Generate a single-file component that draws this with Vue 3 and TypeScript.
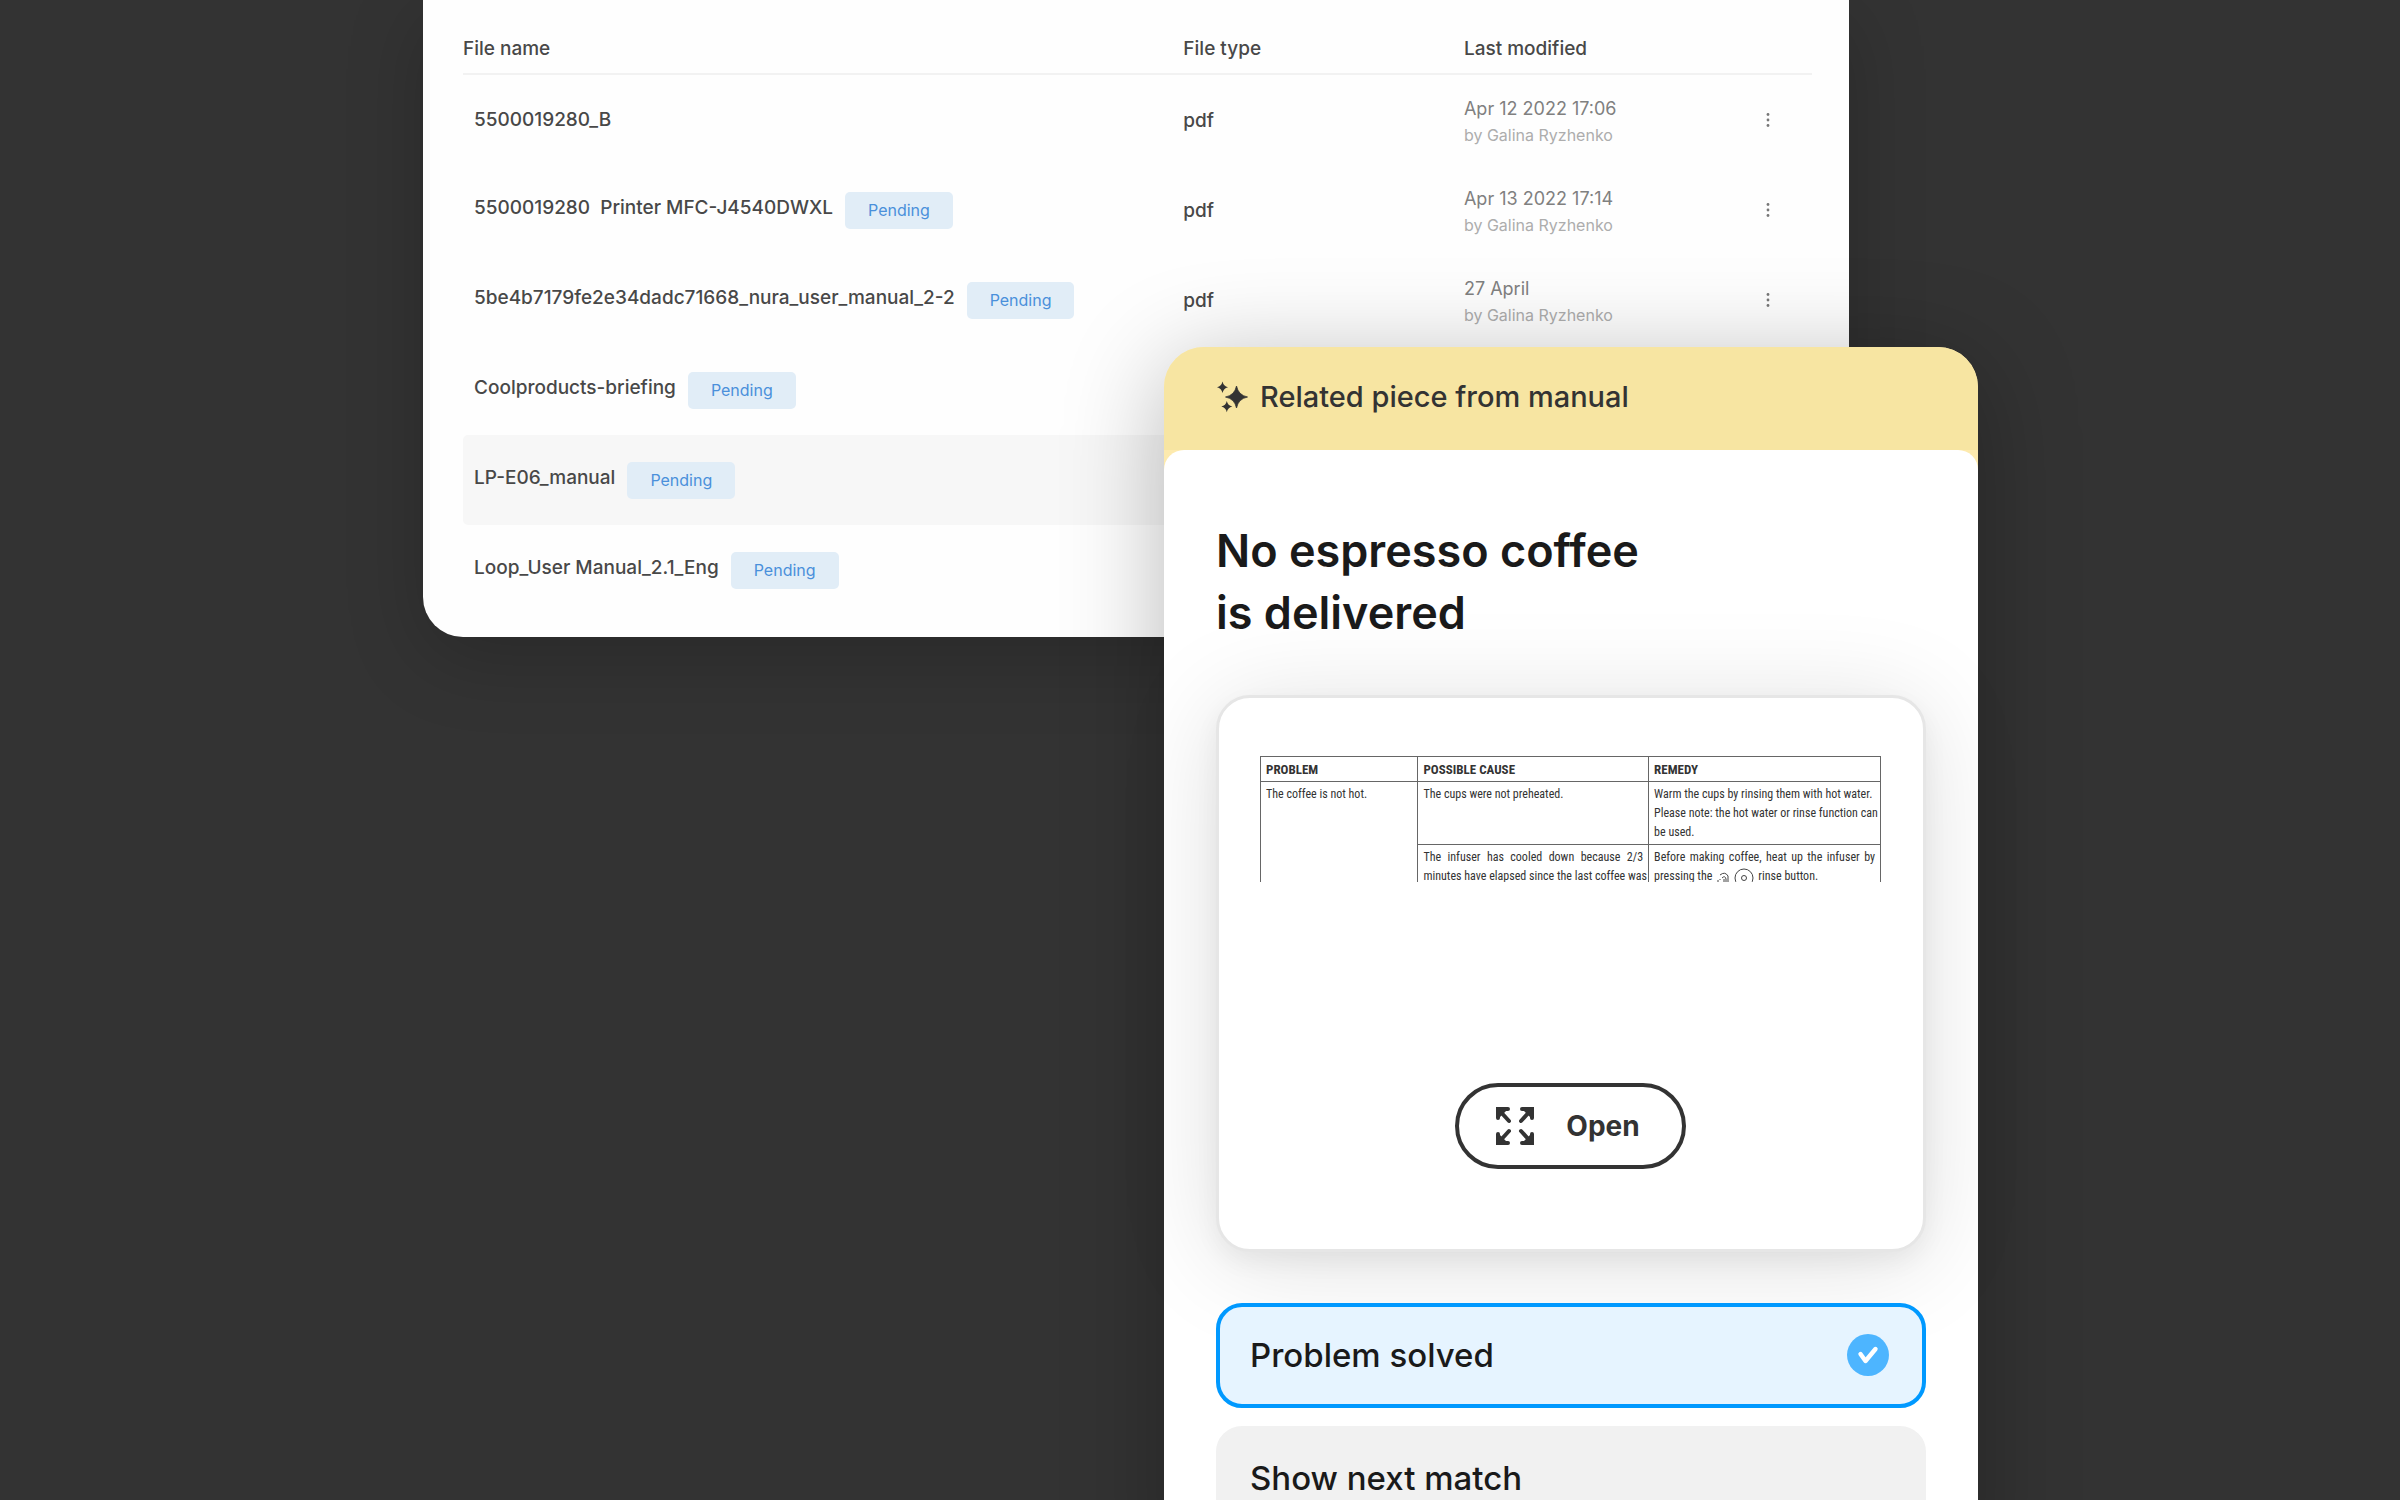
<script setup lang="ts">
import { ref } from 'vue'

interface FileRow {
  name: string
  type?: string
  modified?: string
  author?: string
  pending: boolean
  active?: boolean
}

const files: FileRow[] = [
  { name: '5500019280_B', type: 'pdf', modified: 'Apr 12 2022 17:06', author: 'by Galina Ryzhenko', pending: false },
  { name: '5500019280\u00a0 Printer MFC-J4540DWXL', type: 'pdf', modified: 'Apr 13 2022 17:14', author: 'by Galina Ryzhenko', pending: true },
  { name: '5be4b7179fe2e34dadc71668_nura_user_manual_2-2', type: 'pdf', modified: '27 April', author: 'by Galina Ryzhenko', pending: true },
  { name: 'Coolproducts-briefing', pending: true },
  { name: 'LP-E06_manual', pending: true, active: true },
  { name: 'Loop_User Manual_2.1_Eng', pending: true },
]

const answers = ['Problem solved', 'Show next match']
const selected = ref(answers[0])
</script>

<template>
  <main class="stage">
    <section class="files">
      <table class="file-table">
        <colgroup>
          <col class="col-name" />
          <col class="col-type" />
          <col class="col-modified" />
          <col class="col-menu" />
        </colgroup>
        <thead>
          <tr>
            <th scope="col">File name</th>
            <th scope="col">File type</th>
            <th scope="col">Last modified</th>
            <th></th>
          </tr>
        </thead>
        <tbody>
          <tr v-for="file in files" :key="file.name" :class="{ active: file.active }">
            <td>
              <div class="file">
                <span class="file-name">{{ file.name }}</span>
                <span v-if="file.pending" class="badge">Pending</span>
              </div>
            </td>
            <td>{{ file.type }}</td>
            <td>
              <div v-if="file.modified" class="modified">
                <span class="date">{{ file.modified }}</span>
                <span class="author">{{ file.author }}</span>
              </div>
            </td>
            <td>
              <button v-if="file.modified" class="menu" type="button" aria-label="More actions">
                <svg width="4" height="16" viewBox="0 0 4 16" fill="#777">
                  <circle cx="2" cy="2.5" r="1.4" />
                  <circle cx="2" cy="8" r="1.4" />
                  <circle cx="2" cy="13.5" r="1.4" />
                </svg>
              </button>
            </td>
          </tr>
        </tbody>
      </table>
    </section>

    <section class="phone">
      <header class="phone-head">
        <svg width="32" height="32" viewBox="0 0 32 32" fill="#333">
          <path d="M20.5 5Q22.3 14.2 31.5 16Q22.3 17.8 20.5 27Q18.7 17.8 9.5 16Q18.7 14.2 20.5 5Z" stroke="#333" stroke-width="0.8" stroke-linejoin="round" />
          <path d="M6.5 0.5Q7.5 5.2 12 6.2Q7.5 7.2 6.5 12Q5.5 7.2 1 6.2Q5.5 5.2 6.5 0.5Z" />
          <path d="M10.8 20Q11.8 24.6 16.3 25.6Q11.8 26.6 10.8 31.2Q9.8 26.6 5.3 25.6Q9.8 24.6 10.8 20Z" />
        </svg>
        <span>Related piece from manual</span>
      </header>

      <div class="phone-body">
        <h1>No espresso coffee<br />is delivered</h1>

        <article class="preview">
          <div class="excerpt">
            <table class="manual">
              <colgroup>
                <col class="col-problem" />
                <col class="col-cause" />
                <col class="col-remedy" />
              </colgroup>
              <thead>
                <tr>
                  <th scope="col">PROBLEM</th>
                  <th scope="col">POSSIBLE CAUSE</th>
                  <th scope="col">REMEDY</th>
                </tr>
              </thead>
              <tbody>
                <tr>
                  <td rowspan="2">The coffee is not hot.</td>
                  <td>The cups were not preheated.</td>
                  <td>
                    <span class="line">Warm the cups by rinsing them with hot water.</span>
                    <span class="line">Please note: the hot water or rinse function can</span>
                    <span class="line">be used.</span>
                  </td>
                </tr>
                <tr>
                  <td>
                    <span class="line full">The infuser has cooled down because 2/3</span>
                    <span class="line">minutes have elapsed since the last coffee was</span>
                  </td>
                  <td>
                    <span class="line full">Before making coffee, heat up the infuser by</span>
                    <span class="line keys">
                      pressing the
                      <svg width="14" height="19" viewBox="0 0 14 19" fill="none" stroke="#444" stroke-width="1">
                        <path d="M4 8Q9 4 12 9V17M6 11Q9 8 10 12V17M8 12V17M1 14H3M4 12V13M1 17H3M5 15V17" />
                      </svg>
                      <svg width="20" height="19" viewBox="0 0 20 19" fill="none" stroke="#444" stroke-width="1">
                        <circle cx="10" cy="11" r="9" />
                        <circle cx="10" cy="11" r="2.5" />
                      </svg>
                      rinse button.
                    </span>
                  </td>
                </tr>
              </tbody>
            </table>
          </div>

          <button class="open" type="button">
            <svg width="40" height="40" viewBox="0 0 40 40" fill="none" stroke="#333" stroke-width="4" stroke-linecap="round" stroke-linejoin="miter">
              <path d="M3 12V3H13M4 4L14 15M27 3H37V12M36 4L26 15M3 28V37H13M4 36L14 25M27 37H37V28M36 36L26 25" />
              <path d="M3 3H13L3 13ZM37 3H27L37 13ZM3 37H13L3 27ZM37 37H27L37 27Z" stroke="none" fill="#333" />
            </svg>
            <span>Open</span>
          </button>
        </article>

        <div class="answers">
          <button
            v-for="answer in answers"
            :key="answer"
            type="button"
            class="answer"
            :class="{ selected: answer === selected }"
            :aria-pressed="answer === selected"
            @click="selected = answer"
          >
            <span>{{ answer }}</span>
            <svg v-if="answer === selected" width="42" height="42" viewBox="0 0 42 42">
              <circle cx="21" cy="21" r="21" fill="#4db5ff" />
              <path d="M13.5 20L18.5 27L28.5 15" fill="none" stroke="#fff" stroke-width="4.4" stroke-linecap="round" stroke-linejoin="round" />
            </svg>
          </button>
        </div>
      </div>
    </section>
  </main>
</template>

<style>
body {
  background: #333;
}
</style>

<style scoped>
* {
  box-sizing: border-box;
}

.stage {
  display: grid;
  grid-template-columns: 423fr 741fr 685fr 129fr 422fr;
  align-items: start;
  height: 100vh;
  overflow: hidden;
  background: #333;
  font-family: Inter, "Liberation Sans", sans-serif;
}

button {
  font-family: inherit;
  cursor: pointer;
}

.files {
  grid-column: 2 / 4;
  grid-row: 1;
  padding: 0 37px 22px 40px;
  border-radius: 0 0 40px 40px;
  background: #fefefe;
  box-shadow: 0 20px 80px rgba(0, 0, 0, 0.2);
}

.file-table {
  width: 100%;
  table-layout: fixed;
  border-collapse: separate;
  border-spacing: 0;
  color: #484848;
  font-size: 19px;
  font-weight: 500;
  line-height: 27px;
}

.col-name {
  width: 53.4%;
}

.col-type {
  width: 20.8%;
}

.col-menu {
  width: 88px;
}

.file-table th {
  padding: 35px 0 11px;
  border-bottom: 2px solid #f2f2f2;
  font-weight: 500;
  text-align: left;
}

.file-table td {
  height: 90px;
  padding: 0;
  vertical-align: middle;
}

.file-table td:first-child {
  padding-left: 11px;
  border-radius: 5px 0 0 5px;
}

.active td {
  background: #f7f7f7;
}

.file {
  display: flex;
  align-items: flex-start;
  gap: 12px;
}

.file-name {
  line-height: 32px;
  white-space: nowrap;
}

.badge {
  padding: 0 23px;
  border-radius: 5px;
  background: #e1edf7;
  color: #4a90db;
  font-size: 16px;
  font-weight: 400;
  line-height: 37px;
}

.modified {
  display: flex;
  flex-direction: column;
  padding-top: 4px;
  font-weight: 400;
}

.date {
  color: #808080;
  font-size: 18px;
}

.author {
  color: #adadad;
  font-size: 16px;
}

.menu {
  display: flex;
  justify-content: center;
  width: 100%;
  padding: 8px;
  border: 0;
  background: none;
}

.phone {
  grid-column: 3 / 5;
  grid-row: 1;
  margin-top: 347px;
  border-radius: 40px 40px 0 0;
  background: #fdeaae;
  box-shadow: 0 16px 100px rgba(0, 0, 0, 0.28);
}

.phone-head {
  display: flex;
  align-items: center;
  gap: 12px;
  padding: 32px 52px 35px;
  border-radius: 40px 40px 0 0;
  background: #f7e5a2;
  color: #333;
  font-size: 29px;
  font-weight: 500;
  line-height: 36px;
}

.phone-body {
  padding: 70px 52px 52px;
  border-radius: 20px 20px 0 0;
  background: #fff;
}

h1 {
  margin: 0 0 51px;
  color: #1a1a1a;
  font-size: 45px;
  font-weight: 600;
  line-height: 62px;
}

.preview {
  display: flex;
  flex-direction: column;
  align-items: center;
  margin-bottom: 51px;
  padding: 58px 42px 80px 41px;
  border: 3px solid #e6e6e6;
  border-radius: 34px;
  background: #fff;
  box-shadow: 0 10px 100px rgba(0, 0, 0, 0.13), 0 10px 24px rgba(0, 0, 0, 0.05);
}

.excerpt {
  width: 100%;
  height: 126px;
  overflow: hidden;
}

.manual {
  width: 100%;
  table-layout: fixed;
  border-collapse: collapse;
  color: #333;
  font-family: "Roboto Condensed", Roboto, sans-serif;
  font-size: 12px;
  line-height: 19px;
}

.col-problem {
  width: 25.4%;
}

.col-cause {
  width: 37.2%;
}

.manual th,
.manual td {
  padding: 3px 5px 2px;
  border: 1px solid #666;
  text-align: left;
  vertical-align: top;
}

.manual th {
  font-size: 13px;
  font-weight: 700;
}

.line {
  display: block;
  white-space: nowrap;
}

.full {
  white-space: normal;
  text-align: justify;
  text-align-last: justify;
}

.keys {
  display: flex;
  gap: 4px;
}

.open {
  display: flex;
  align-items: center;
  gap: 31px;
  height: 86px;
  margin-top: 201px;
  padding: 0 42px 0 36px;
  border: 4px solid #333;
  border-radius: 43px;
  background: #fff;
  color: #333;
  font-size: 28px;
  font-weight: 700;
}

.answers {
  display: flex;
  flex-direction: column;
  gap: 18px;
}

.answer {
  display: flex;
  align-items: center;
  justify-content: space-between;
  height: 105px;
  padding: 0 33px 2px 30px;
  border: 4px solid #f1f1f1;
  border-radius: 26px;
  background: #f1f1f1;
  color: #1a1a1a;
  font-size: 33px;
  font-weight: 500;
}

.selected {
  border-color: #0099ff;
  background: #e6f4ff;
}
</style>
